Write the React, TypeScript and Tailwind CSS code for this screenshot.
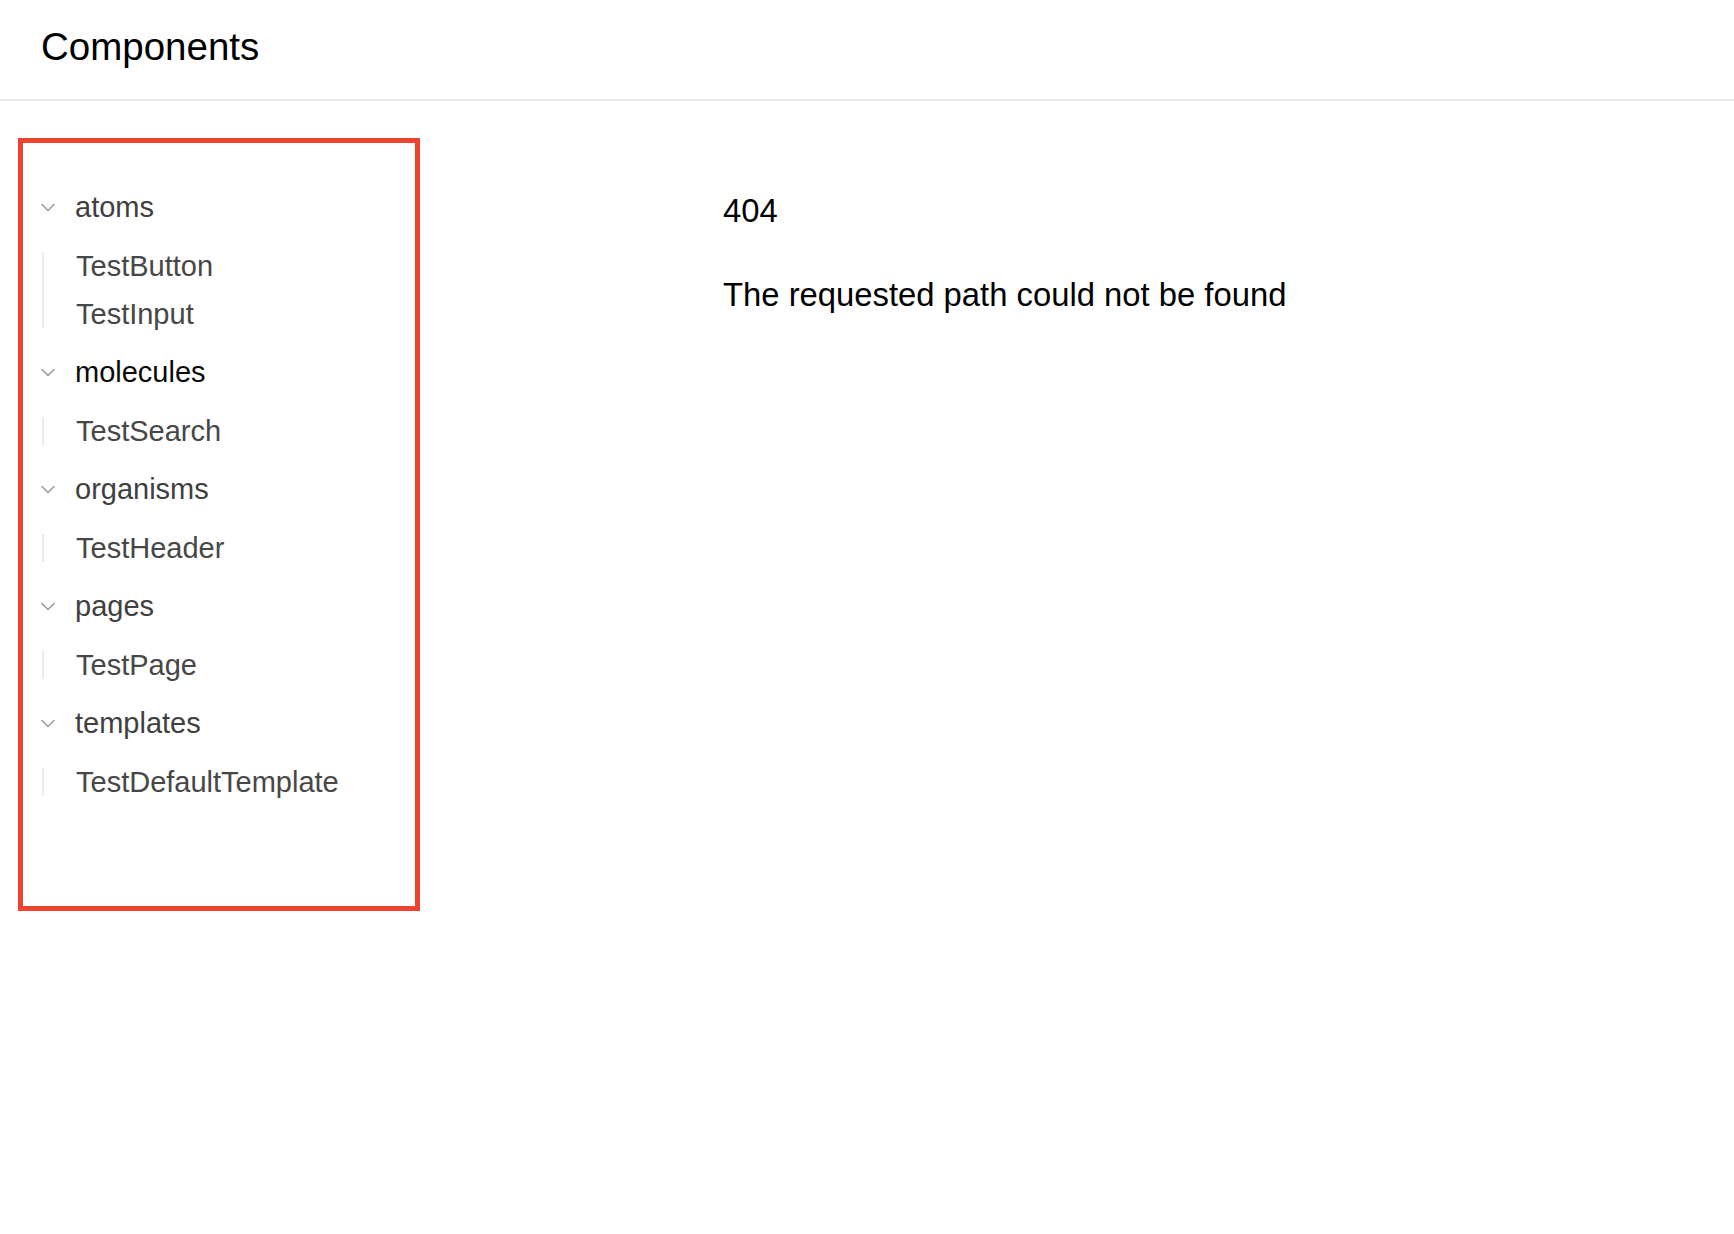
import React from "react";

type Group = { name: string; items: string[]; active?: boolean };

const groups: Group[] = [
  { name: "atoms", items: ["TestButton", "TestInput"] },
  { name: "molecules", items: ["TestSearch"], active: true },
  { name: "organisms", items: ["TestHeader"] },
  { name: "pages", items: ["TestPage"] },
  { name: "templates", items: ["TestDefaultTemplate"] },
];

function Chevron() {
  return (
    <svg width="14" height="9" viewBox="0 0 14 9" fill="none" className="shrink-0">
      <path d="M1 1.5 L7 7.5 L13 1.5" stroke="#9a9a9a" strokeWidth="1.5" strokeLinecap="round" strokeLinejoin="round" />
    </svg>
  );
}

function NavGroup({ group }: { group: Group }) {
  return (
    <div>
      <div className="flex h-[59px] items-center gap-[20px]">
        <Chevron />
        <span className={group.active ? "text-[29px] text-[#0a0a0a]" : "text-[29px] text-[#3f3f3f]"}>
          {group.name}
        </span>
      </div>
      <ul className="my-[15px] ml-[1px] flex flex-col gap-[20px] border-l-2 border-[#ebebeb] pl-[32px]">
        {group.items.map((item) => (
          <li key={item} className="text-[29px] leading-[28px] text-[#474747]">
            {item}
          </li>
        ))}
      </ul>
    </div>
  );
}

export default function App() {
  return (
    <div className="min-h-screen bg-white font-['Liberation_Sans',Arial,sans-serif] text-black">
      <header className="h-[101px] border-b-2 border-[#e8e8e8] pl-[41px] pt-[25px]">
        <h1 className="text-[38.5px] leading-[44px] text-black">Components</h1>
      </header>

      <div className="flex">
        <nav className="ml-[18px] mt-[37px] h-[773px] w-[402px] shrink-0 border-[5px] border-[#ec4431] pl-[18px] pt-[35px]">
          {groups.map((g) => (
            <NavGroup key={g.name} group={g} />
          ))}
        </nav>

        <main className="pl-[303px] pt-[90px]">
          <p className="text-[32.8px] leading-[40px]">404</p>
          <p className="mt-[44px] text-[32.8px] leading-[40px]">The requested path could not be found</p>
        </main>
      </div>
    </div>
  );
}
